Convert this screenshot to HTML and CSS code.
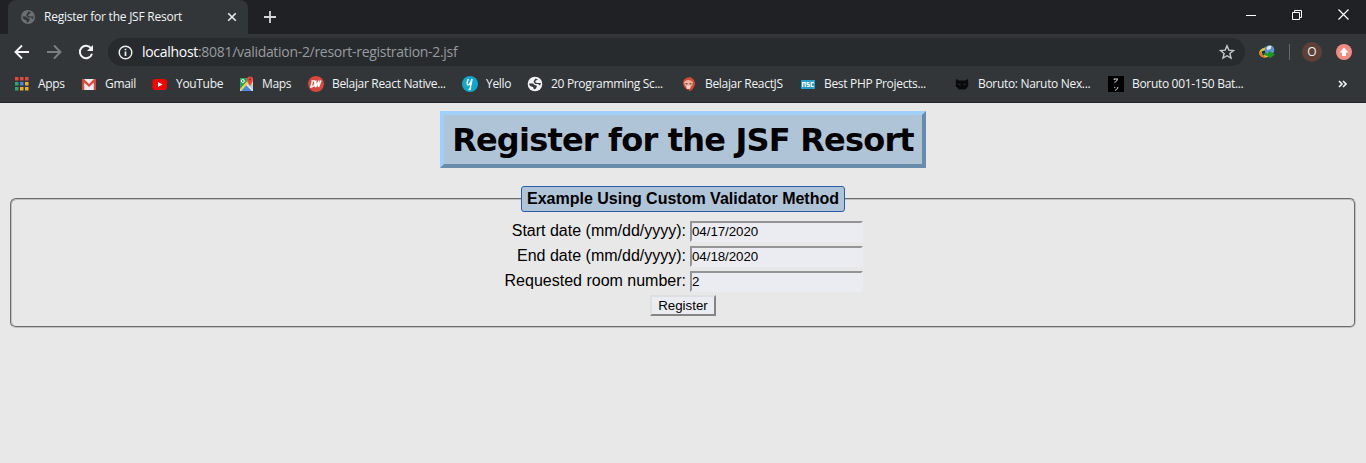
FILE: index.html
```html
<!DOCTYPE html>
<html lang="en">
<head>
<meta charset="utf-8">
<title>Register for the JSF Resort</title>
<link rel="stylesheet" href="styles.css">
</head>
<body>
<header class="browser">
  <div class="tabstrip">
    <div class="tab">
      <svg class="tab-icon" width="14" height="14" viewBox="0 0 16 16"><circle cx="8" cy="8" r="8" fill="#6c7073"/><path d="M1.500 7.500h4l2 2 2.500.5-1 3-2 1.500-1-3-3-1zM8.500 1.500l3 1.500L9 4.500l-1 2 2 1h4.500l-1 3-2-2H8L6 6z" fill="#303437"/></svg>
      <span class="tab-title">Register for the JSF Resort</span>
      <svg class="tab-close" width="10" height="10" viewBox="0 0 10 10"><path d="M1.200 1.200l7.600 7.600M8.800 1.200L1.200 8.800" stroke="#e8eaed" stroke-width="1.600"/></svg>
    </div>
    <svg class="new-tab" width="12" height="12" viewBox="0 0 12 12"><path d="M6 0v12M0 6h12" stroke="#d5d7d9" stroke-width="1.800"/></svg>
    <div class="window-controls">
      <svg width="10" height="10" viewBox="0 0 10 10"><path d="M0 5.500h10" stroke="#fff"/></svg>
      <svg width="10" height="10" viewBox="0 0 10 10" fill="none" stroke="#fff"><path d="M.5 2.500h7v7h-7zM2.500 2.500v-2h7v7h-2"/></svg>
      <svg width="11" height="11" viewBox="0 0 11 11"><path d="M.5.500l10 10M10.500.500l-10 10" stroke="#fff" stroke-width="1.200"/></svg>
    </div>
  </div>
  <div class="toolbar">
    <svg class="nav-icon" width="16" height="16" viewBox="0 0 16 16" fill="none" stroke="#f1f3f4" stroke-width="1.900"><path d="M15 8H2M8 1.500L1.500 8 8 14.500"/></svg>
    <svg class="nav-icon" width="16" height="16" viewBox="0 0 16 16" fill="none" stroke="#7c7f82" stroke-width="1.900"><path d="M1 8h13M8 1.500L14.500 8 8 14.500"/></svg>
    <svg class="nav-icon" width="16" height="16" viewBox="0 0 16 16"><path d="M13.200 4.500A6.200 6.200 0 1 0 14 9.800" fill="none" stroke="#f1f3f4" stroke-width="2"/><path d="M15 1v6H9z" fill="#f1f3f4"/></svg>
    <div class="address">
      <svg width="15" height="15" viewBox="0 0 15 15"><circle cx="7.500" cy="7.500" r="6.300" fill="none" stroke="#e8eaed" stroke-width="1.500"/><path d="M7.500 6.500v4.500M7.500 3.700v1.600" stroke="#e8eaed" stroke-width="1.700"/></svg>
      <span class="url"><span class="host">localhost</span>:8081/validation-2/resort-registration-2.jsf</span>
      <svg class="star" width="16" height="16" viewBox="0 0 16 16"><path d="M8 1.800l1.800 4.300 4.700.4-3.600 3 1.100 4.600L8 11.700l-4 2.400 1.100-4.600-3.600-3 4.700-.4z" fill="none" stroke="#c6c9cc" stroke-width="1.400"/></svg>
    </div>
    <svg class="extension" width="16" height="14" viewBox="0 0 16 14"><path d="M8 2.500C3 2-1 6 .5 9.500 2 13 7 13.500 10 11L7 8z" fill="#e2c23a"/><path d="M1 6c-1.500 3 .5 7 5.500 6.500L3 9z" fill="#d8743a"/><path d="M2.500 6.500L7 5 6.500 9 4 10.500z" fill="#20282a"/><circle cx="10.500" cy="5" r="4.800" fill="#5f93cf"/><path d="M7.500 3q2-3 5-2l-1 3-3 1z" fill="#e2edf2"/><path d="M4 8l5 .8L10 6l6 3.500-5.500 4-.5-2.500-4-.5z" fill="#159a22"/></svg>
    <span class="divider"></span>
    <span class="avatar">O</span>
    <svg class="update" width="16" height="16" viewBox="0 0 16 16"><circle cx="8" cy="8" r="8" fill="#f28b82"/><path d="M8 3.500l4.500 5H10V12H6V8.500H3.500z" fill="#fff"/></svg>
  </div>
  <nav class="bookmarks">
    <a class="bookmark w-apps"><svg width="16" height="16" viewBox="0 0 16 16"><g fill="#e04b40"><path d="M2 1h3.500v3.500H2zM7 1h3.500v3.500H7zM12 1h3.500v3.500H12z"/></g><g fill="#35a46a"><path d="M2 6h3.500v3.500H2zM2 11h3.500v3.500H2z"/></g><path d="M7 6h3.500v3.500H7z" fill="#4385e8"/><path d="M12 6h3.500v3.500H12zM7 11h3.500v3.500H7zM12 11h3.500v3.500H12z" fill="#e9ae30"/></svg><span>Apps</span></a>
    <a class="bookmark w-gmail"><svg width="16" height="16" viewBox="0 0 16 16"><path d="M1 3h14v11H1z" fill="#ededed"/><path d="M1 14V3h2l5 5 5-5h2v11h-2.200V6.500L8 11 3.200 6.500V14z" fill="#d9483b"/></svg><span>Gmail</span></a>
    <a class="bookmark w-youtube"><svg width="16" height="16" viewBox="0 0 16 16"><rect x="0.500" y="3" width="14.500" height="11" rx="3" fill="#f00"/><path d="M6 6l4.500 2.500L6 11z" fill="#fff"/></svg><span>YouTube</span></a>
    <a class="bookmark w-maps"><svg width="16" height="16" viewBox="0 0 16 16"><path d="M2 2h13v13H2z" fill="#e7e9e8"/><path d="M2 2h10L2 14z" fill="#2ca15b"/><path d="M3 15l5-6 6 6z" fill="#4b86e8"/><path d="M9 8l6 6V8l-2-2z" fill="#c7ccd0"/><path d="M2 13L11 3l1 2L3 15z" fill="#f4cd42"/><circle cx="4.800" cy="5" r="1.500" fill="none" stroke="#fff"/><path d="M9 3.500a3 3 0 0 1 6 0Q15 6 12 10 9 6 9 3.500z" fill="#e5493e"/><circle cx="12" cy="3.500" r="1" fill="#83251f"/></svg><span>Maps</span></a>
    <a class="bookmark w-native"><svg width="16" height="16" viewBox="0 0 16 16"><circle cx="8" cy="8" r="8" fill="#d8463e"/><path d="M3.500 5h3Q7.500 7 6 10L3 11l1.200-5M8 4.500L7.500 11l3-5v5L13 4.500" fill="none" stroke="#fff" stroke-width="1.500"/></svg><span>Belajar React Native...</span></a>
    <a class="bookmark w-yello"><svg width="16" height="16" viewBox="0 0 16 16"><circle cx="8" cy="8" r="8" fill="#11a6cc"/><path d="M6.300 3Q4 8 6 9q2 0 4-6L8 13.500H6.500" fill="none" stroke="#fff" stroke-width="1.500"/></svg><span>Yello</span></a>
    <a class="bookmark w-prog"><svg width="16" height="16" viewBox="0 0 16 16"><circle cx="8" cy="8" r="7.300" fill="#f1f3f4"/><path d="M2 7.500h4l1.500 1.500 2.500.8-1 2.700-2 1-1-2.500-3-1zM8.500 2.500l2.500 1L9 4.500l-1 1.500 2 1h4l-1 2.500-2-1.500H8L6.500 5.500z" fill="#35393c"/></svg><span>20 Programming Sc...</span></a>
    <a class="bookmark w-react"><svg width="16" height="16" viewBox="0 0 16 16"><path d="M2 7Q2 2 9 1q5 2 5 7-1 5-5 7-7-3-7-8z" fill="#d64835"/><path d="M3 6q4-4 9 0l-1 4H4z" fill="#f0b49d"/><path d="M4.500 7h2v1.500h-2zM8.500 7h2v1.500h-2z" fill="#795047"/><path d="M5 10h5l-1 3H6z" fill="#f0d6c5"/></svg><span>Belajar ReactJS</span></a>
    <a class="bookmark w-php"><svg width="16" height="16" viewBox="0 0 16 16"><path d="M1 4h14v9H1z" fill="#24a0cd"/><path d="M2.700 11V6.700h2.500V11M9.500 6.700H7.200v1.900h2v1.900H6.700M13.800 6.700H11.300v3.800h2.500" fill="none" stroke="#fff" stroke-width="1.200"/></svg><span>Best PHP Projects...</span></a>
    <a class="bookmark w-naruto"><svg width="16" height="16" viewBox="0 0 16 16"><path d="M2 3l3 1.500h6L14 3l.3 7-3 3.500H5L1.700 10z" fill="#090a0b"/><path d="M4.500 8l2 1M11.500 8l-2 1" stroke="#33373a"/></svg><span>Boruto: Naruto Nex...</span></a>
    <a class="bookmark w-bat"><svg width="16" height="16" viewBox="0 0 16 16"><path d="M0 0h16v16H0z" fill="#000"/><path d="M6.500 2.500L6 4M6.500 3h3Q9 5.500 6.500 6.500M6.500 11l.6 1M10 11q-.5 2.500-3 3.500" fill="none" stroke="#d0d0d0" stroke-width="1.100"/></svg><span>Boruto 001-150 Bat...</span></a>
    <svg class="more" width="9" height="8" viewBox="0 0 9 8"><path d="M1 1l3 3-3 3M5 1l3 3-3 3" fill="none" stroke="#f1f3f4" stroke-width="1.600"/></svg>
  </nav>
</header>
<main class="page">
  <h1 class="title"><span>Register for the JSF Resort</span></h1>
  <fieldset class="panel">
    <legend class="legend">Example Using Custom Validator Method</legend>
    <form class="form">
      <label class="row"><span class="label">Start date (mm/dd/yyyy):</span><input class="field" value="04/17/2020"></label>
      <label class="row"><span class="label">End date (mm/dd/yyyy):</span><input class="field" value="04/18/2020"></label>
      <label class="row"><span class="label">Requested room number:</span><input class="field" value="2"></label>
      <button class="submit" type="button">Register</button>
    </form>
  </fieldset>
</main>
</body>
</html>
```
FILE: styles.css
```css
* { box-sizing: border-box; }
body { margin: 0; height: 463px; overflow: hidden; background: #e8e8e8; font-family: "Liberation Sans", Arial, sans-serif; }
svg { display: block; flex: none; }
.browser { height: 103px; background: #323639; color: #f1f3f4; font: 12px/16px "Open Sans", "Noto Sans", sans-serif; border-bottom: 1px solid #242729; }
.tabstrip { height: 34px; background: #202124; display: flex; align-items: center; padding-left: 8px; }
.tab { width: 240px; height: 34px; background: #323639; border-radius: 8px 8px 0 0; display: flex; align-items: center; padding: 0 11px 0 13px; }
.tab-title { margin-left: 9px; white-space: nowrap; letter-spacing: -0.24px; }
.tab-close { margin-left: auto; }
.new-tab { margin-left: 16px; }
.window-controls { margin-left: auto; display: flex; align-items: center; gap: 36px; padding: 0 17px 5px 0; }
.toolbar { height: 36px; display: flex; align-items: center; padding-left: 14px; }
.nav-icon { margin-right: 16px; }
.address { width: 1137px; height: 28px; margin-left: -2px; border-radius: 14px; background: #282b2e; display: flex; align-items: center; padding: 0 10px; }
.url { margin-left: 9px; font-size: 14px; letter-spacing: -0.3px; color: #979b9f; white-space: nowrap; }
.host { color: #fff; }
.star { margin-left: auto; }
.extension { margin-left: 14px; }
.divider { width: 1px; height: 16px; background: #65696c; margin-left: 14px; }
.avatar { width: 20px; height: 20px; border-radius: 50%; background: #5d4037; margin-left: 12px; text-align: center; line-height: 20px; }
.update { margin-left: 14px; }
.bookmarks { height: 28px; display: flex; align-items: center; padding-left: 13px; }
.bookmark { display: flex; align-items: center; gap: 8px; white-space: nowrap; letter-spacing: -0.32px; flex: none; }
.w-apps { width: 68px; gap: 9px; }
.w-gmail { width: 71px; }
.w-youtube { width: 86px; }
.w-maps { width: 70px; }
.w-native { width: 154px; }
.w-yello { width: 65px; }
.w-prog { width: 154px; }
.w-react { width: 119px; }
.w-php { width: 154px; }
.w-naruto { width: 154px; }
.w-bat { width: 154px; }
.more { margin-left: auto; margin-right: 19px; }
.page { padding: 8px; }
.title { width: 486px; height: 57px; margin: 0 auto; padding-top: 2px; border: 4px solid; border-color: #a0cff9 #698cab #698cab #a0cff9; background: #b0c4d8; color: #000; display: flex; align-items: center; justify-content: center; white-space: nowrap; font: bold 32px/39px "DejaVu Sans", Verdana, sans-serif; letter-spacing: -0.8px; }
.panel { margin: 18px 2px 0; padding: 0; border: 2px groove #c0c0c0; border-radius: 6px; height: 142px; }
.legend { width: 324px; height: 26px; margin: 0 auto; padding: 0; border: 1px solid #2a5caa; border-radius: 3px; background: #b0c4d8; text-align: center; font-weight: bold; font-size: 16px; line-height: 24px; white-space: nowrap; }
.form { display: flex; flex-direction: column; align-items: center; padding-top: 9px; }
.row { width: 360px; height: 25px; display: flex; justify-content: flex-end; }
.label { font-size: 16px; line-height: 19px; margin-right: 4px; white-space: nowrap; }
.field { width: 173px; height: 21px; padding: 0; border: 2px solid; border-color: #949494 #ebecf1 #ebecf1 #949494; background: #ebecf1; color: #000; font: 13.333px/17px "Liberation Sans", Arial, sans-serif; letter-spacing: -0.05px; }
.submit { width: 66px; height: 21px; margin-top: -1px; padding: 0; border: 2px solid; border-color: #dedfe2 #858585 #858585 #dedfe2; background: #ebecf1; color: #000; font: 13.333px/17px "Liberation Sans", Arial, sans-serif; }
```
